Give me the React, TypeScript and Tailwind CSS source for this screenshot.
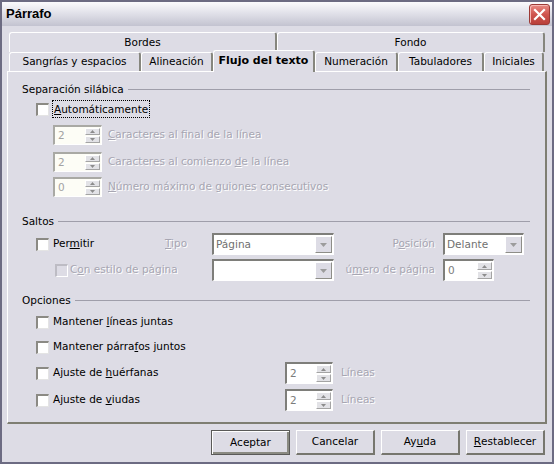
import React from "react";

const dis = "text-[#a7a6b2] [text-shadow:1px_1px_0_#ffffff]";

function Tri({ up = false, color = "#8c8c8c", w = 5, h = 3 }: { up?: boolean; color?: string; w?: number; h?: number }) {
    return (
        <svg width={w} height={h} viewBox={`0 0 ${w} ${h}`} className="block">
            <path d={up ? `M0 ${h} L${w / 2} 0 L${w} ${h}Z` : `M0 0 L${w} 0 L${w / 2} ${h}Z`} fill={color} />
        </svg>
    );
}

function Check({ disabled = false }: { disabled?: boolean }) {
    return (
        <span
            className={`block w-[13px] h-[13px] shrink-0 border-t-2 border-l-2 border-r border-b ${
                disabled
                    ? "bg-[#dddce5] border-t-[#bdbcc4] border-l-[#bdbcc4] border-r-white border-b-white"
                    : "bg-white border-t-[#8b8a84] border-l-[#8b8a84] border-r-[#e4e4e4] border-b-[#e4e4e4]"
            }`}
        />
    );
}

function Spin({ value, w, light = false }: { value: string; w: string; light?: boolean }) {
    return (
        <div
            className={`${w} h-full flex border-t-2 border-l-2 border-r border-b border-r-white border-b-white ${
                light ? "bg-[#fdfdf6] border-t-[#a9a9a4] border-l-[#a9a9a4]" : "bg-white border-t-[#7e7e7a] border-l-[#7e7e7a]"
            }`}
        >
            <span className={`flex-1 flex items-center pl-[3px] ${light ? "text-[#a3a3a3]" : "text-[#7c7c7c]"}`}>{value}</span>
            <div className="w-[16px] flex flex-col gap-px py-px pr-px">
                <span className="flex-1 flex items-center justify-center bg-[#e2e2e6] border-t border-l border-t-white border-l-white border-r border-b border-r-[#a4a4a4] border-b-[#a4a4a4]">
                    <Tri up />
                </span>
                <span className="flex-1 flex items-center justify-center bg-[#e2e2e6] border-t border-l border-t-white border-l-white border-r border-b border-r-[#a4a4a4] border-b-[#a4a4a4]">
                    <Tri />
                </span>
            </div>
        </div>
    );
}

function Select({ value, w }: { value: string; w: string }) {
    return (
        <div className={`${w} h-full flex bg-white border-t-2 border-l-2 border-t-[#7e7e7a] border-l-[#7e7e7a] border-r border-b border-r-white border-b-white`}>
            <span className="flex-1 flex items-center pl-[2px] text-[#707070]">{value}</span>
            <span className="w-[17px] m-px flex items-center justify-center bg-[#dddce5] border-t border-l border-t-white border-l-white border-r border-b border-r-[#8e8e88] border-b-[#8e8e88]">
                <Tri color="#9c9c9c" w={7} h={4} />
            </span>
        </div>
    );
}

function Heading({ label }: { label: string }) {
    return (
        <div className="flex items-center h-[14px] gap-[4px]">
            <span className="leading-none">{label}</span>
            <div className="flex-1 h-px bg-[#9f9eaa]" />
        </div>
    );
}

function Tab({ label, w, active = false }: { label: string; w: string; active?: boolean }) {
    return (
        <div
            className={`${w} flex items-center justify-center rounded-t-[3px] border-t border-l border-t-white border-l-white border-r-2 border-r-[#86867e] ${
                active ? "h-[22px] -mb-px relative z-10 bg-[#dddce5] font-bold text-[11px]" : "h-[19px]"
            }`}
        >
            {label}
        </div>
    );
}

function Button({ children, def = false }: { children: React.ReactNode; def?: boolean }) {
    return (
        <button
            className={`w-[79px] h-[25px] flex items-center justify-center bg-[#dddce5] ${
                def
                    ? "border border-[#5a5a58] shadow-[inset_1px_1px_0_#ffffff,inset_-2px_-2px_0_#8a8a82]"
                    : "border-t border-l border-t-white border-l-white border-r-2 border-b-2 border-r-[#76766e] border-b-[#76766e]"
            }`}
        >
            {children}
        </button>
    );
}

export default function App() {
    return (
        <div className="w-[554px] h-[464px] flex flex-col bg-[#dddce5] border-2 border-[#6c6b82] font-['DejaVu_Sans',sans-serif] text-[10.5px] text-black">
            {/* title bar */}
            <div className="h-[24px] flex items-center justify-between pl-[4px] pr-[2px] bg-[linear-gradient(to_bottom,#fbfbfd,#e2e2ea_45%,#c3c3d0)]">
                <span className="font-['Liberation_Sans',sans-serif] font-bold text-[13px]">Párrafo</span>
                <span className="w-[21px] h-[21px] flex items-center justify-center rounded-[3px] border border-[#9c3a36] bg-[linear-gradient(to_bottom,#e88a84,#cf544e_50%,#b9403b)] shadow-[inset_1px_1px_0_#f6b8b4]">
                    <svg width="13" height="13" viewBox="0 0 13 13">
                        <path d="M2 2 L11 11 M11 2 L2 11" stroke="#ffffff" strokeWidth="2.2" strokeLinecap="square" />
                    </svg>
                </span>
            </div>

            {/* body */}
            <div className="flex flex-col px-[5px] pt-[6px]">
                {/* tabs */}
                <div className="flex flex-col ml-[2px]">
                    <div className="flex">
                        <div className="w-[268px] h-[20px] flex items-center justify-center rounded-t-[3px] border-t border-l border-t-white border-l-white border-r-2 border-r-[#86867e]">Bordes</div>
                        <div className="w-[268px] h-[20px] flex items-center justify-center rounded-t-[3px] border-t border-l border-t-white border-l-white border-r-2 border-r-[#86867e]">Fondo</div>
                    </div>
                    <div className="flex items-end h-[19px]">
                        <Tab label="Sangrías y espacios" w="w-[132px]" />
                        <Tab label="Alineación" w="w-[72px]" />
                        <Tab label="Flujo del texto" w="w-[102px]" active />
                        <Tab label="Numeración" w="w-[83px]" />
                        <Tab label="Tabuladores" w="w-[86px]" />
                        <Tab label="Iniciales" w="w-[60px]" />
                    </div>
                </div>

                {/* panel */}
                <div className="h-[353px] flex flex-col pl-[14px] pr-[15px] border-t border-l border-t-white border-l-white border-r-2 border-b-2 border-r-[#7e7e72] border-b-[#7e7e72]">
                    <div className="mt-[10px]">
                        <Heading label="Separación silábica" />
                    </div>
                    <div className="mt-[3px] h-[20px] flex items-center pl-[14px]">
                        <Check />
                        <span className="ml-[3px] px-px leading-[16px] border border-dotted border-black">
                            <u>A</u>utomáticamente
                        </span>
                    </div>
                    <div className="mt-[6px] h-[20px] flex items-center pl-[31px]">
                        <Spin value="2" w="w-[49px]" light />
                        <span className={`ml-[6px] ${dis}`}>
                            <u>C</u>aracteres al final de la línea
                        </span>
                    </div>
                    <div className="mt-[7px] h-[20px] flex items-center pl-[31px]">
                        <Spin value="2" w="w-[49px]" light />
                        <span className={`ml-[6px] ${dis}`}>
                            Caracteres al comienzo <u>d</u>e la línea
                        </span>
                    </div>
                    <div className="mt-[5px] h-[20px] flex items-center pl-[31px]">
                        <Spin value="0" w="w-[49px]" light />
                        <span className={`ml-[6px] ${dis}`}>
                            <u>N</u>úmero máximo de guiones consecutivos
                        </span>
                    </div>

                    <div className="mt-[17px]">
                        <Heading label="Saltos" />
                    </div>
                    <div className="mt-[5px] h-[22px] flex items-center pl-[14px]">
                        <Check />
                        <span className="ml-[4px] w-[112px]">
                            Per<u>m</u>itir
                        </span>
                        <span className={`w-[47px] ${dis}`}>
                            <u>T</u>ipo
                        </span>
                        <Select value="Página" w="w-[122px]" />
                        <span className={`w-[109px] text-right pr-[8px] ${dis}`}>
                            P<u>o</u>sición
                        </span>
                        <Select value="Delante" w="w-[81px]" />
                    </div>
                    <div className="mt-[4px] h-[22px] flex items-center pl-[33px]">
                        <Check disabled />
                        <span className={`ml-[2px] w-[142px] ${dis}`}>
                            C<u>o</u>n estilo de página
                        </span>
                        <Select value="" w="w-[122px]" />
                        <span className={`w-[109px] text-right pr-[8px] ${dis}`}>
                            ú<u>m</u>ero de página
                        </span>
                        <Spin value="0" w="w-[51px]" />
                    </div>

                    <div className="mt-[12px]">
                        <Heading label="Opciones" />
                    </div>
                    <div className="mt-[5px] h-[20px] flex items-center pl-[14px]">
                        <Check />
                        <span className="ml-[4px]">
                            Mantener <u>l</u>íneas juntas
                        </span>
                    </div>
                    <div className="mt-[5px] h-[20px] flex items-center pl-[14px]">
                        <Check />
                        <span className="ml-[4px]">
                            Mantener párra<u>f</u>os juntos
                        </span>
                    </div>
                    <div className="mt-[5px] h-[22px] flex items-center pl-[14px]">
                        <Check />
                        <span className="ml-[4px] w-[232px]">
                            Ajuste de <u>h</u>uérfanas
                        </span>
                        <Spin value="2" w="w-[48px]" />
                        <span className={`ml-[8px] ${dis}`}>Líneas</span>
                    </div>
                    <div className="mt-[5px] h-[22px] flex items-center pl-[14px]">
                        <Check />
                        <span className="ml-[4px] w-[232px]">
                            Ajuste de <u>v</u>iudas
                        </span>
                        <Spin value="2" w="w-[48px]" />
                        <span className={`ml-[8px] ${dis}`}>Líneas</span>
                    </div>
                </div>

                {/* buttons */}
                <div className="mt-[6px] mr-[2px] flex justify-end gap-[6px]">
                    <Button def>Aceptar</Button>
                    <Button>Cancelar</Button>
                    <Button>
                        Ay<u>u</u>da
                    </Button>
                    <Button>
                        <u>R</u>establecer
                    </Button>
                </div>
            </div>
        </div>
    );
}
